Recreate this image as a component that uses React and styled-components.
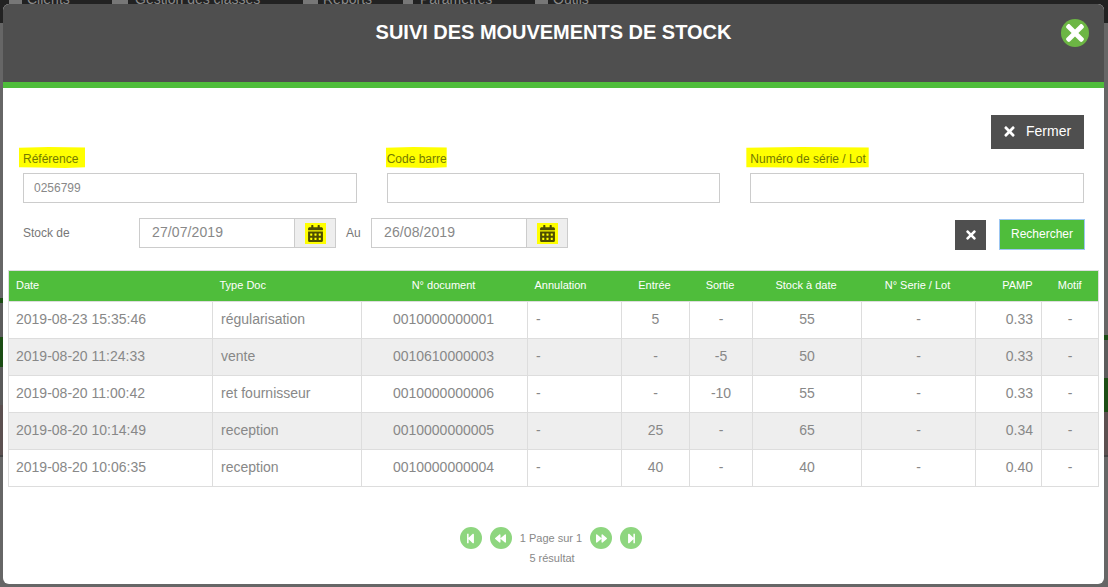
import React from "react";
import styled, { createGlobalStyle } from "styled-components";
import { FaTimes, FaCalendarAlt, FaStepBackward, FaBackward, FaForward, FaStepForward } from "react-icons/fa";

const Global = createGlobalStyle`
  html, body { margin: 0; padding: 0; height: 100%; overflow: hidden; }
  body { font-family: "Liberation Sans", Arial, sans-serif; background: #666; }
  * { box-sizing: border-box; }
`;

const Page = styled.div`
  position: relative;
  width: 1108px;
  height: 587px;
  padding: 4px 4px 3px 3px;
  overflow: hidden;
  background:
    linear-gradient(#222 0 23px, transparent 23px) top/100% 100% no-repeat,
    linear-gradient(to bottom, transparent 298px, #1c4d14 298px 303px, #5c5c5c 303px 337px, #1c4d14 337px 367px, #5a5a5a 367px 405px, #5c5050 405px 455px, #444 455px 457px, #666 457px) left/3px 100% no-repeat,
    linear-gradient(to bottom, transparent 335px, #1c4d14 335px 340px, #5c5c5c 340px 378px, #1c4d14 378px 412px, #5c5050 412px 455px, #444 455px 457px, #666 457px) right/4px 100% no-repeat,
    #666;
`;

const TopNav = styled.div`
  position: absolute;
  top: -9px;
  left: 9px;
  display: flex;
  color: #8a8a8a;
  font-size: 14px;
  line-height: 16px;
`;

const NavItem = styled.span`
  display: flex;
  width: ${(p) => p.$w}px;
`;

const NavIcon = styled.i`
  flex: none;
  width: ${(p) => p.$w}px;
  height: 13px;
  margin: 0 ${(p) => p.$gap}px 0 0;
  background: #777;
`;

const Modal = styled.div`
  position: relative;
  width: 1101px;
  height: 580px;
  background: #fff;
  border-radius: 6px;
  overflow: hidden;
`;

const Header = styled.header`
  position: relative;
  height: 84px;
  background: #4f4f4f;
  border-bottom: 6px solid #4fbd3b;
  padding-top: 16px;
  text-align: center;
`;

const Title = styled.h1`
  margin: 0;
  color: #fff;
  font-size: 20px;
  line-height: 24px;
  font-weight: 700;
  letter-spacing: -0.02px;
`;

const CloseCircle = styled.button`
  position: absolute;
  top: 15px;
  right: 15px;
  width: 28px;
  height: 28px;
  padding: 0;
  border: 0;
  border-radius: 50%;
  background: #6cb644;
  color: #fff;
  display: flex;
  align-items: center;
  justify-content: center;
  font-size: 26px;
`;

const Body = styled.div`
  padding: 27px 6px 0 5px;
`;

const ActionRow = styled.div`
  display: flex;
  justify-content: flex-end;
  margin-right: 14px;
`;

const DarkButton = styled.button`
  display: flex;
  align-items: center;
  gap: 9px;
  height: 34px;
  width: 93px;
  padding: 0 0 2px 11px;
  border: 0;
  background: #4f4f4f;
  color: #fff;
  font-family: inherit;
  font-size: 14px;
`;

const Filters = styled.div`
  margin: -2px 14px 0 15px;
`;

const FieldGrid = styled.div`
  display: grid;
  grid-template-columns: repeat(3, 1fr);
  column-gap: 30px;
`;

const Field = styled.div`
  display: flex;
  flex-direction: column;
  align-items: flex-start;
`;

const Highlight = styled.label`
  height: 21px;
  margin: 0 0 5px ${(p) => -p.$l}px;
  padding: 0 ${(p) => p.$r}px 0 ${(p) => p.$l}px;
  background: #ffff00;
  color: #737a00;
  font-size: 12px;
  line-height: 24px;
  clip-path: polygon(0 3%, 45% 0, 100% 2%, 100% 97%, 70% 100%, 30% 98%, 0 96%);
`;

const TextInput = styled.input`
  width: 100%;
  height: 30px;
  padding: 0 10px;
  border: 1px solid #ccc;
  background: #fff;
  color: #888;
  font-family: inherit;
  font-size: 12px;
`;

const DateRow = styled.div`
  display: flex;
  align-items: flex-start;
  margin-top: 15px;
  height: 32px;
`;

const DateLabel = styled.span`
  width: ${(p) => p.$w}px;
  padding-left: ${(p) => p.$pl || 0}px;
  color: #777;
  font-size: 12px;
  line-height: 30px;
`;

const DateGroup = styled.div`
  display: flex;
  width: 197px;
  height: 30px;
  border: 1px solid #ccc;
`;

const DateInput = styled.input`
  width: 155px;
  min-width: 0;
  padding: 0 12px 2px;
  border: 0;
  border-right: 1px solid #ccc;
  background: #fff;
  color: #888;
  font-family: inherit;
  font-size: 14px;
  letter-spacing: 0.1px;
`;

const Addon = styled.span`
  flex: 1;
  display: flex;
  align-items: center;
  justify-content: center;
  background: #eee;
`;

const CalendarMark = styled.span`
  width: 21px;
  height: 21px;
  display: flex;
  align-items: center;
  justify-content: center;
  background: #ffff00;
  color: #4d4d00;
  font-size: 17px;
`;

const SearchActions = styled.div`
  margin-left: auto;
  display: flex;
  align-items: flex-start;
  gap: 13px;
  margin-right: -1px;
`;

const ClearButton = styled(DarkButton)`
  justify-content: center;
  width: 31px;
  height: 30px;
  margin-top: 2px;
  padding: 0;
  font-size: 14px;
`;

const SearchButton = styled.button`
  width: 86px;
  height: 31px;
  margin-top: 1px;
  padding: 0 0 2px;
  border: 1px solid #9cc6f2;
  background: #4fbd3b;
  color: #fff;
  font-family: inherit;
  font-size: 12px;
`;

const StockTable = styled.table`
  width: 1090px;
  margin-top: 20px;
  table-layout: fixed;
  border-collapse: collapse;
  border: 1px solid #ddd;
`;

const HeadCell = styled.th`
  height: 31px;
  padding: ${(p) => p.$pad || "0 9px 3px 7px"};
  background: #4fbd3b;
  color: #fff;
  font-size: 11px;
  font-weight: 400;
  text-align: ${(p) => p.$align || "center"};
`;

const Row = styled.tr`
  background: ${(p) => (p.$shaded ? "#eee" : "#fff")};
`;

const Cell = styled.td`
  height: 37px;
  padding: ${(p) => p.$pad || "0 8px 2px"};
  border: 1px solid #ddd;
  color: #888;
  font-size: 14px;
  text-align: ${(p) => p.$align || "center"};
  white-space: nowrap;
`;

const Pagination = styled.nav`
  display: flex;
  align-items: center;
  justify-content: center;
  gap: 8px;
  margin-top: 40px;
  margin-left: -4px;
  height: 22px;
`;

const PageButton = styled.button`
  width: 22px;
  height: 22px;
  padding: 0;
  border: 0;
  border-radius: 50%;
  background: #8ed67f;
  color: #fff;
  display: flex;
  align-items: center;
  justify-content: center;
  font-size: 11px;
`;

const PageText = styled.span`
  color: #888;
  font-size: 11px;
`;

const Results = styled.div`
  margin: 2px 0 0 -2px;
  text-align: center;
  color: #888;
  font-size: 11px;
  line-height: 15px;
`;

const widths = [204, 149, 166, 94, 68, 63, 109, 114, 66, 57];

const rows = [
  ["2019-08-23 15:35:46", "régularisation", "0010000000001", "-", "5", "-", "55", "-", "0.33", "-"],
  ["2019-08-20 11:24:33", "vente", "0010610000003", "-", "-", "-5", "50", "-", "0.33", "-"],
  ["2019-08-20 11:00:42", "ret fournisseur", "0010000000006", "-", "-", "-10", "55", "-", "0.33", "-"],
  ["2019-08-20 10:14:49", "reception", "0010000000005", "-", "25", "-", "65", "-", "0.34", "-"],
  ["2019-08-20 10:06:35", "reception", "0010000000004", "-", "40", "-", "40", "-", "0.40", "-"],
];

const headers = ["Date", "Type Doc", "N° document", "Annulation", "Entrée", "Sortie", "Stock à date", "N° Serie / Lot", "PAMP", "Motif"];
const aligns = ["left", "left", "center", "left", "center", "center", "center", "center", "right", "center"];
const cellPads = ["0 8px 2px 7px", null, "0 10px 2px 8px", null, null, null, null, null, null, null];
const headPads = [null, null, null, null, null, null, null, null, null, "0 8px 3px"];

const DateField = ({ value }) => (
  <DateGroup>
    <DateInput readOnly value={value} />
    <Addon>
      <CalendarMark>
        <FaCalendarAlt />
      </CalendarMark>
    </Addon>
  </DateGroup>
);

export default function App() {
  return (
    <Page>
      <Global />
      <TopNav>
        <NavItem $w={103}><NavIcon $w={13} $gap={5} />Clients</NavItem>
        <NavItem $w={191}><NavIcon $w={16} $gap={7} />Gestion des classes</NavItem>
        <NavItem $w={100}><NavIcon $w={15} $gap={5} />Reports</NavItem>
        <NavItem $w={132}><NavIcon $w={10} $gap={7} />Paramètres</NavItem>
        <NavItem $w={70}><NavIcon $w={13} $gap={5} />Outils</NavItem>
      </TopNav>
      <Modal>
        <Header>
          <Title>SUIVI DES MOUVEMENTS DE STOCK</Title>
          <CloseCircle aria-label="Fermer">
            <FaTimes />
          </CloseCircle>
        </Header>
        <Body>
          <ActionRow>
            <DarkButton>
              <FaTimes size={15} />
              Fermer
            </DarkButton>
          </ActionRow>
          <Filters>
            <FieldGrid>
              <Field>
                <Highlight $l={4} $r={7}>Référence</Highlight>
                <TextInput readOnly value="0256799" />
              </Field>
              <Field>
                <Highlight $l={1} $r={0}>Code barre</Highlight>
                <TextInput readOnly value="" />
              </Field>
              <Field>
                <Highlight $l={4} $r={3}>Numéro de série / Lot</Highlight>
                <TextInput readOnly value="" />
              </Field>
            </FieldGrid>
            <DateRow>
              <DateLabel $w={116}>Stock de</DateLabel>
              <DateField value="27/07/2019" />
              <DateLabel $w={35} $pl={10}>Au</DateLabel>
              <DateField value="26/08/2019" />
              <SearchActions>
                <ClearButton aria-label="Effacer">
                  <FaTimes />
                </ClearButton>
                <SearchButton>Rechercher</SearchButton>
              </SearchActions>
            </DateRow>
          </Filters>
          <StockTable>
            <colgroup>
              {widths.map((w, i) => (
                <col key={i} style={{ width: w }} />
              ))}
            </colgroup>
            <thead>
              <tr>
                {headers.map((h, i) => (
                  <HeadCell key={h} $align={aligns[i]} $pad={headPads[i]}>
                    {h}
                  </HeadCell>
                ))}
              </tr>
            </thead>
            <tbody>
              {rows.map((r, ri) => (
                <Row key={ri} $shaded={ri % 2 === 1}>
                  {r.map((c, ci) => (
                    <Cell key={ci} $align={aligns[ci]} $pad={cellPads[ci]}>
                      {c}
                    </Cell>
                  ))}
                </Row>
              ))}
            </tbody>
          </StockTable>
          <Pagination>
            <PageButton aria-label="Première">
              <FaStepBackward />
            </PageButton>
            <PageButton aria-label="Précédente">
              <FaBackward />
            </PageButton>
            <PageText>1 Page sur 1</PageText>
            <PageButton aria-label="Suivante">
              <FaForward />
            </PageButton>
            <PageButton aria-label="Dernière">
              <FaStepForward />
            </PageButton>
          </Pagination>
          <Results>5 résultat</Results>
        </Body>
      </Modal>
    </Page>
  );
}
